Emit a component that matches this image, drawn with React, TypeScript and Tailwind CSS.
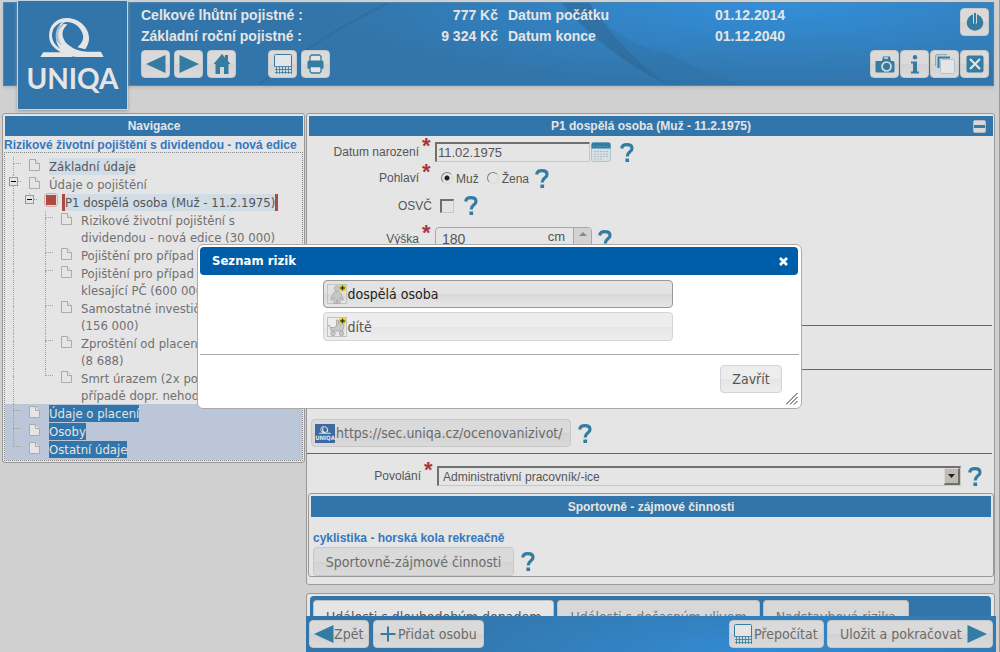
import type { ReactNode } from "react";
import { useState } from "react";
import clsx from "clsx";

type TreeNode = {
  id: string;
  level: number;
  lines: string[];
  expandable?: boolean;
  last?: boolean;
  state?: "visited" | "active" | "marked";
};

const treeNodes: TreeNode[] = [
  { id: "zaklad", level: 1, lines: ["Základní údaje"], state: "visited" },
  { id: "pojisteni", level: 1, lines: ["Údaje o pojištění"], expandable: true },
  { id: "p1", level: 2, lines: ["P1 dospělá osoba (Muž - 11.2.1975)"], expandable: true, last: true, state: "active" },
  { id: "rzp", level: 3, lines: ["Rizikové životní pojištění s", "dividendou - nová edice (30 000)"] },
  { id: "smrt", level: 3, lines: ["Pojištění pro případ smrti"] },
  { id: "smrtk", level: 3, lines: ["Pojištění pro případ smrti", "klesající PČ (600 000)"] },
  { id: "invest", level: 3, lines: ["Samostatné investiční", "(156 000)"] },
  { id: "zprost", level: 3, lines: ["Zproštění od placení", "(8 688)"] },
  { id: "uraz", level: 3, lines: ["Smrt úrazem (2x pojistná", "případě dopr. nehody)"], last: true },
  { id: "placeni", level: 1, lines: ["Údaje o placení"], state: "marked" },
  { id: "osoby", level: 1, lines: ["Osoby"], state: "marked" },
  { id: "ostatni", level: 1, lines: ["Ostatní údaje"], state: "marked", last: true }
];

const summary = [
  { label: "Celkové lhůtní pojistné :", value: "777 Kč", dateLabel: "Datum počátku", date: "01.12.2014" },
  { label: "Základní roční pojistné :", value: "9 324 Kč", dateLabel: "Datum konce", date: "01.12.2040" }
];

const uiFont = "font-['DejaVu_Sans_Condensed','DejaVu_Sans',Verdana,sans-serif]";
const buttonLook =
  "rounded border border-[#c8c8c8] bg-[linear-gradient(#dadada_50%,#d2d2d2_50%,#dadada)] text-[#6b6b6b]";
const titleLook = "flex h-5 items-center justify-center bg-[#3275aa] text-xs font-bold text-[#e5e5e5]";

function LogoMark({ className }: { className?: string }) {
  return (
    <svg viewBox="0 0 68 42" className={className} fill="none" aria-hidden="true">
      <path
        fill="#e5e5e5"
        d="M1 41 4 36H22C13 31 10 26 10 19C10 8 18 1 28 1C41 1 51 11 51 22C51 26 49 30 47 33L39 31C43 28 45 24 45 20C44 11 36 5 28 5C26 5 24 6 23 8C25 7 27 7 29 8C23 12 22 19 27 26C33 32 40 35 50 35.500H63L66 41H40C28 41 18 33 17 22C16 14 19 8 24 5C17 7 13 12 13 19C13 27 20 33 29 37L34 41Z"
      />
      <path fill="#3275aa" d="M25 8C18 13 18 22 23 29C17 25 14 20 15 14C17 9 20 8 25 8Z" opacity=".35" />
    </svg>
  );
}

function ArrowIcon({ left }: { left?: boolean }) {
  return (
    <svg viewBox="0 0 20 18" className="h-[18px] w-5 shrink-0" aria-hidden="true">
      <path d={left ? "M19.500 0V18L0 9Z" : "M.5 0V18L20 9Z"} fill="#357ca2" />
    </svg>
  );
}

function CalcIcon() {
  return (
    <svg viewBox="0 0 18 20" className="h-5 w-[18px] shrink-0" fill="none" stroke="#357ca2" aria-hidden="true">
      <path d="M.5 12V1.500Q.5 .5 1.500 .5H16.500Q17.500 .5 17.500 1.500V12" fill="#e5e5e5" />
      <path
        d="M0 12.500H18M1 15.500H18M1 18.500H18M2.500 12V20M5.500 12V20M8.500 12V20M11.500 12V20M14.500 12V20M17.500 12V20"
        opacity=".8"
      />
    </svg>
  );
}

function HelpIcon() {
  return (
    <button type="button" aria-label="Nápověda" className="flex h-5 w-4 shrink-0 items-center">
      <svg viewBox="0 0 14 19" className="h-[19px] w-3.5" fill="none" aria-hidden="true">
        <path
          d="M1.700 5.500C2 2.800 4 1.700 6.800 1.700C10 1.700 12 3.200 12 5.500C12 9 7.200 8.700 7.200 13.500"
          stroke="#357ca2"
          strokeWidth="3.200"
        />
        <path d="M5.400 15.500H9.100V19H5.400Z" fill="#357ca2" />
      </svg>
    </button>
  );
}

function DocIcon() {
  return (
    <svg viewBox="0 0 12 13" className="h-[13px] w-3" fill="#e5e5e5" stroke="#aeaca0" aria-hidden="true">
      <path d="M1.500 .5H7.500L11.500 4.500V11.500H1.500Z" />
      <path d="M7.500 .5V4.500H11.500" />
    </svg>
  );
}

function AddBadge() {
  return (
    <>
      <circle cx="15.500" cy="4" r="3.600" fill="#e0d11c" stroke="none" />
      <path d="M15.500 1.800V6.200M13.300 4H17.700" stroke="#333" strokeWidth="1.300" />
    </>
  );
}

function AdultIcon() {
  return (
    <svg viewBox="0 0 20 20" className="size-5 shrink-0" fill="#c8c8c8" stroke="#a4a4a4" strokeWidth=".7" aria-hidden="true">
      <rect x=".5" y=".5" width="19" height="19" fill="none" stroke="#c3c3c3" strokeWidth="1" />
      <circle cx="10" cy="4.500" r="2.700" />
      <path d="M7.500 8H12.500Q14 8.500 14.500 11L16.500 15.500L15 16.500L13 13V19.500H10.500V15.500H9.500V19.500H7V13L5 16.500L3.500 15.500L5.500 11Q6 8.500 7.500 8Z" />
      <AddBadge />
    </svg>
  );
}

function StrollerIcon() {
  return (
    <svg viewBox="0 0 20 20" className="size-5 shrink-0" fill="#c8c8c8" stroke="#a4a4a4" strokeWidth=".8" aria-hidden="true">
      <rect x=".5" y=".5" width="19" height="19" fill="none" stroke="#c3c3c3" strokeWidth="1" />
      <path d="M.8 8.500H2.500L4.500 14H15.500L17 9.500V7H11.500V3H9.500V9L7 10.500H3.500" />
      <circle cx="6" cy="16.500" r="2.200" />
      <circle cx="14.500" cy="16.500" r="2.200" />
      <AddBadge />
    </svg>
  );
}

function ToolButton({ label, children }: { label: string; children: ReactNode }) {
  return (
    <button type="button" aria-label={label} className={clsx("flex h-7 w-[29px] items-center justify-center", buttonLook)}>
      {children}
    </button>
  );
}

function Header() {
  return (
    <header className="relative mt-0.5 mr-[5px] ml-[3px] flex h-[84px] shrink-0 items-start border border-[#4a86b4] bg-[radial-gradient(ellipse_45%_100%_at_78%_0%,#338fda,#3275aa)] shadow-[0_2px_3px_#bbb]">
      <svg
        viewBox="0 0 990 82"
        preserveAspectRatio="none"
        className="absolute inset-0 size-full"
        fill="none"
        aria-hidden="true"
      >
        <path d="M255 82Q320 30 385 0" stroke="#2f6796" strokeWidth="2" opacity=".5" />
        <path d="M558 0Q600 50 664 82Q615 45 586 0Z" fill="#2f6592" opacity=".6" />
        <path d="M586 0Q615 45 664 82H740Q700 70 664 50Q610 40 586 0Z" fill="#2f6ca0" opacity=".3" />
      </svg>

      <div className="relative -mt-[3px] ml-[13px] flex h-[110px] w-[111px] shrink-0 flex-col items-center border border-[#c9d3dc] bg-[#3275aa] pt-4 shadow-[0_1px_3px_#999]">
        <LogoMark className="h-[41px] w-[67px]" />
        <span className="mt-1 font-[Lato,sans-serif] text-[28px] leading-8 font-bold text-[#e5e5e5]">UNIQA</span>
      </div>

      <div className="relative ml-[13px] flex flex-1 justify-between pt-0.5 pr-1">
        <div>
          <dl className="text-sm leading-[21px] font-bold text-[#e5e5e5]">
            {summary.map(row => (
              <div key={row.label} className="grid grid-cols-[200px_147px_197px_auto] gap-x-[10px]">
                <dt className="whitespace-nowrap">{row.label}</dt>
                <dd className="text-right">{row.value}</dd>
                <dt>{row.dateLabel}</dt>
                <dd>{row.date}</dd>
              </div>
            ))}
          </dl>
          <div className="mt-[3px] flex gap-1">
            <ToolButton label="Zpět">
              <ArrowIcon left />
            </ToolButton>
            <ToolButton label="Vpřed">
              <ArrowIcon />
            </ToolButton>
            <ToolButton label="Domů">
              <svg viewBox="0 0 18 20" className="h-5 w-[18px]" fill="#357ca2" aria-hidden="true">
                <path d="M9 0L12 3.500V1H15V7L17.500 10H15.500V20H11V13H7V20H2.500V10H.5Z" />
              </svg>
            </ToolButton>
            <div className="ml-7 flex gap-1">
              <ToolButton label="Přepočítat">
                <CalcIcon />
              </ToolButton>
              <ToolButton label="Tisk">
                <svg viewBox="0 0 17 20" className="h-5 w-[17px]" aria-hidden="true">
                  <path d="M3 7V2.500L4.500 1H12.500L14 2.500V7" fill="#e5e5e5" stroke="#357ca2" strokeWidth="1.300" />
                  <rect x=".5" y="6.500" width="16" height="8.500" rx="1.500" fill="#357ca2" />
                  <path d="M3 12.500H14V17.500L12.500 19H4.500L3 17.500Z" fill="#e5e5e5" stroke="#357ca2" strokeWidth="1.300" />
                </svg>
              </ToolButton>
            </div>
          </div>
        </div>

        <div className="flex flex-col items-end gap-3.5 pt-[3px]">
          <ToolButton label="Odhlásit">
            <svg viewBox="0 0 18 18" className="size-[18px]" aria-hidden="true">
              <circle cx="9" cy="9.500" r="8.300" fill="#357ca2" />
              <path d="M9 0V10.500" stroke="#d8d8d8" strokeWidth="4" />
              <path d="M9 0V10.500" stroke="#357ca2" strokeWidth="2" />
            </svg>
          </ToolButton>
          <div className="flex gap-px">
            <ToolButton label="Fotografie">
              <svg viewBox="0 0 20 18" className="h-[18px] w-5" aria-hidden="true">
                <path d="M1 6H7L8 1.500H15L16 6H18Q19.500 6 19.500 7.500V16Q19.500 17.500 18 17.500H2Q.5 17.500 .5 16V7Q.5 6 1 6Z" fill="#357ca2" />
                <path d="M9 3H13" stroke="#ddd" strokeWidth="1.500" />
                <circle cx="11.500" cy="11.500" r="4.500" fill="#357ca2" stroke="#ddd" strokeWidth="1.700" />
              </svg>
            </ToolButton>
            <ToolButton label="Informace">
              <svg viewBox="0 0 8 19" className="h-[19px] w-2" fill="#357ca2" aria-hidden="true">
                <circle cx="4" cy="2.200" r="2.200" />
                <path d="M0 6.500H6V16.500H8V18.500H0V16.500H2V8.500H0Z" />
              </svg>
            </ToolButton>
            <ToolButton label="Kopírovat">
              <svg viewBox="0 0 20 20" className="size-5" fill="#e5e5e5" stroke="#357ca2" aria-hidden="true">
                <path d="M.7 12V2Q.7 .7 2 .7H12" fill="none" opacity=".6" />
                <path d="M3.500 14V3.500H15" fill="none" strokeWidth="2" />
                <rect x="5.500" y="5.500" width="14" height="14" rx="1" stroke="#a9c4d2" />
              </svg>
            </ToolButton>
            <ToolButton label="Zavřít aplikaci">
              <svg viewBox="0 0 18 18" className="size-[18px]" aria-hidden="true">
                <rect x=".5" y=".5" width="17" height="17" rx="2" fill="#357ca2" />
                <path d="M4 4L14 14M14 4L4 14" stroke="#e5e5e5" strokeWidth="2.200" />
              </svg>
            </ToolButton>
          </div>
        </div>
      </div>
    </header>
  );
}

function TreeRow({ node }: { node: TreeNode }) {
  const marked = node.state === "marked";
  const active = node.state === "active";
  return (
    <li className={clsx("flex leading-[17px]", marked && "bg-[#bcc6d9]", marked && node.last && "pb-0.5")}>
      {Array.from({ length: node.level }, (_, i) => {
        const own = i === node.level - 1;
        const through = own ? !node.last : i === 0;
        return (
          <span key={i} className="relative flex w-4 shrink-0 flex-col pl-2">
            <span
              className={clsx(
                "h-[7px] border-dotted border-[#a0a0a0]",
                (own || through) && "border-l",
                own && "border-b"
              )}
            />
            <span className={clsx("flex-1 border-dotted border-[#a0a0a0]", through && "border-l")} />
            {own && node.expandable && (
              <button
                type="button"
                aria-label="Sbalit"
                className="absolute top-0.5 left-1 flex size-[9px] items-center justify-center border border-[#9a9a92] bg-[#e5e5e5]"
              >
                <span className="h-px w-[5px] bg-black" />
              </button>
            )}
          </span>
        );
      })}
      <span className="flex w-7 shrink-0 pt-0.5 pl-[7px]">
        {active ? (
          <span className="-mt-0.5 size-3.5 rounded-sm border border-[#d0a8a4] p-px">
            <span className="block size-full bg-[#ad4b42]" />
          </span>
        ) : (
          <DocIcon />
        )}
      </span>
      <a
        href={`#${node.id}`}
        className={clsx(
          "mt-px whitespace-nowrap",
          node.state === "visited" && "bg-[#d0dce6] text-[#555]",
          active && "-ml-[3px] border-x-[3px] border-[#ad4b42] bg-[#d0dce6] text-[#555]",
          marked && "bg-[#3275aa] text-[#e5e5e5]",
          !node.state && "text-[#707070]"
        )}
      >
        {node.lines.map(line => (
          <span key={line} className="block">
            {line}
          </span>
        ))}
      </a>
    </li>
  );
}

function Navigation() {
  return (
    <nav className="w-[303px] shrink-0 self-start overflow-hidden rounded-[3px] border border-[#999] bg-[#e5e5e5] px-px pt-0.5 pb-px">
      <h2 className={clsx(titleLook, "ml-px")}>Navigace</h2>
      <p className="h-4 pt-px text-xs leading-4 font-bold whitespace-nowrap text-[#3478c0]">
        Rizikové životní pojištění s dividendou - nová edice
      </p>
      <ul className={clsx("border border-dotted border-[#888] pt-1 text-[13px]", uiFont)}>
        {treeNodes.map(node => (
          <TreeRow key={node.id} node={node} />
        ))}
      </ul>
    </nav>
  );
}

function Field({
  label,
  htmlFor,
  required,
  className,
  children
}: {
  label: string;
  htmlFor: string;
  required?: boolean;
  className?: string;
  children: ReactNode;
}) {
  return (
    <div className={clsx("flex items-center", className)}>
      <label htmlFor={htmlFor} className="flex w-[125px] shrink-0 justify-end pr-px text-xs text-[#555]">
        {label}
        {required && (
          <span className="-mt-2 ml-[3px] h-4 w-2.5 text-[22px] leading-5 font-bold text-[#ad343e]">*</span>
        )}
      </label>
      {children}
    </div>
  );
}

function PersonPanel() {
  const [sex, setSex] = useState("muz");
  const radioLook =
    "size-3 appearance-none rounded-full border border-[#808080] border-r-[#d8d8d0] border-b-[#d8d8d0] bg-[#e5e5e5] checked:bg-[radial-gradient(#222_2px,transparent_3px)]";
  return (
    <section className="rounded-[3px] border border-[#999] bg-[#e5e5e5] pt-0.5 pb-[7px]">
      <h2 className={clsx(titleLook, "relative mr-px ml-0.5")}>
        P1 dospělá osoba (Muž - 11.2.1975)
        <button
          type="button"
          aria-label="Sbalit panel"
          className="absolute right-[7px] flex size-[13px] items-center justify-center rounded-xs border border-[#bbb] bg-[#d8d8d8]"
        >
          <span className="h-[3px] w-[11px] bg-[#357ca2]" />
        </button>
      </h2>

      <div className="pt-[3px] pl-px">
        <Field label="Datum narození" htmlFor="born" required className="h-[26px]">
          <input
            id="born"
            defaultValue="11.02.1975"
            className="ml-0.5 h-5 w-[155px] border border-t-2 border-l-2 border-[#c8c8c0] border-t-[#707070] border-l-[#707070] px-px text-[13px] text-[#555]"
          />
          <button type="button" aria-label="Kalendář" className="mr-[9px] ml-px">
            <svg viewBox="0 0 20 20" className="size-5" aria-hidden="true">
              <rect x=".5" y=".5" width="19" height="19" rx="2" fill="#d6dfe4" stroke="#a9c4d2" />
              <path d="M.5 2.500Q.5 .5 2.500 .5H17.500Q19.500 .5 19.500 2.500V6.500H.5Z" fill="#357ca2" />
              <path d="M2 4.500H18" stroke="#5d97b5" strokeDasharray="1 1" />
              <path d="M3 9.500H17M3 12H17M3 14.500H17M3 17H12" stroke="#b3bcc2" strokeDasharray="2 1" />
            </svg>
          </button>
          <HelpIcon />
        </Field>

        <Field label="Pohlaví" htmlFor="sex-m" required className="h-[26px]">
          <div className="flex h-full items-center text-xs text-[#555]">
            <input
              id="sex-m"
              type="radio"
              name="sex"
              checked={sex === "muz"}
              onChange={() => setSex("muz")}
              className={clsx("mr-[3px] ml-2", radioLook)}
            />
            <label htmlFor="sex-m" className="pt-0.5">
              Muž
            </label>
            <input
              id="sex-z"
              type="radio"
              name="sex"
              checked={sex === "zena"}
              onChange={() => setSex("zena")}
              className={clsx("mr-[3px] ml-2", radioLook)}
            />
            <label htmlFor="sex-z" className="mr-1.5 pt-0.5">
              Žena
            </label>
          </div>
          <HelpIcon />
        </Field>

        <Field label="OSVČ" htmlFor="osvc" className="h-[29px]">
          <input
            id="osvc"
            type="checkbox"
            className="mr-[10px] ml-[7px] size-3.5 appearance-none border border-t-2 border-l-2 border-[#c8c8c0] border-t-[#707070] border-l-[#707070] bg-[#e5e5e5] checked:bg-[#357ca2]"
          />
          <HelpIcon />
        </Field>

        <Field label="Výška" htmlFor="height" required className="h-9 pt-0.5">
          <div className="mr-1.5 ml-0.5 flex h-6 w-[157px] overflow-hidden rounded border border-[#a8a8a8] text-sm text-[#555]">
            <input id="height" defaultValue="180" className="min-w-0 flex-1 pl-1.5" />
            <span className="mr-2 text-[13px] leading-[18px]">cm</span>
            <button
              type="button"
              aria-label="Zvýšit"
              className="flex w-[18px] justify-center border-l border-[#a8a8a8] bg-[#d2d2d2] pt-1"
            >
              <svg viewBox="0 0 8 4" className="h-1 w-2" fill="#888" aria-hidden="true">
                <path d="M0 4L4 0L8 4Z" />
              </svg>
            </button>
          </div>
          <HelpIcon />
        </Field>
      </div>

      <hr className="mt-[69px] mr-0.5 border-[#666]" />
      <hr className="mt-[43px] mr-0.5 border-[#666]" />

      <div className="mt-[49px] flex items-center pl-1">
        <button
          type="button"
          className={clsx("mr-[7px] flex h-7 w-[260px] items-center pl-[3px] text-sm whitespace-nowrap", buttonLook, uiFont)}
        >
          <span className="mr-px flex h-[19px] w-5 shrink-0 flex-col items-center bg-[#3d6aa0] pt-0.5">
            <LogoMark className="h-2 w-3.5" />
            <span className="text-[6px] leading-[7px] font-bold text-[#e5e5e5]">UNIQA</span>
          </span>
          https://sec.uniqa.cz/ocenovanizivot/
        </button>
        <HelpIcon />
      </div>

      <hr className="mt-1.5 mr-0.5 border-[#666]" />

      <div className="flex items-center pt-3">
        <Field label="Povolání" htmlFor="job" required className="h-5 min-w-0 flex-1 pl-[3px]">
          <div className="relative ml-0.5 min-w-0 flex-1">
            <select
              id="job"
              className="block h-5 w-full appearance-none border border-t-2 border-l-2 border-[#c8c8c0] border-t-[#707070] border-l-[#707070] pl-1 text-xs text-[#555]"
            >
              <option>Administrativní pracovník/-ice</option>
            </select>
            <span className="pointer-events-none absolute top-0.5 right-px flex h-[17px] w-4 items-center justify-center border border-r-2 border-b-2 border-[#d8d8d0] border-r-[#707070] border-b-[#707070] bg-[#bfbcb5]">
              <svg viewBox="0 0 7 4" className="h-1 w-[7px]" aria-hidden="true">
                <path d="M0 0H7L3.500 4Z" fill="#222" />
              </svg>
            </span>
          </div>
        </Field>
        <div className="mr-[10px] ml-[7px]">
          <HelpIcon />
        </div>
      </div>

      <section className="mt-[7px] ml-px rounded-[3px] border border-[#999] p-0.5 pb-0">
        <h3 className={clsx(titleLook, "h-[21px]")}>Sportovně - zájmové činnosti</h3>
        <p className="mt-[13px] pl-0.5 text-xs leading-4 font-bold text-[#3478c0]">cyklistika - horská kola rekreačně</p>
        <div className="mt-px flex items-center pl-0.5">
          <button
            type="button"
            className={clsx("mr-[7px] h-[29px] w-[201px] text-sm whitespace-nowrap", buttonLook, uiFont)}
          >
            Sportovně-zájmové činnosti
          </button>
          <HelpIcon />
        </div>
      </section>
    </section>
  );
}

function EventTabs() {
  const tabLook = "h-8 rounded-t border border-b-0 border-[#c0c0c0] px-3 text-sm leading-6 whitespace-nowrap";
  return (
    <section className="mt-2 rounded-[3px] border border-[#999] bg-[#e5e5e5] px-[3px] pt-0.5">
      <div role="tablist" className={clsx("flex h-20 gap-[3px] rounded-t bg-[#3275aa] pt-1 pl-[3px]", uiFont)}>
        <button type="button" role="tab" aria-selected="true" className={clsx(tabLook, "bg-[#e5e5e5] text-[#555]")}>
          Události s dlouhodobým dopadem
        </button>
        <button type="button" role="tab" className={clsx(tabLook, "bg-[#d8d8d8] text-[#777]")}>
          Události s dočasným vlivem
        </button>
        <button type="button" role="tab" className={clsx(tabLook, "bg-[#d8d8d8] text-[#777]")}>
          Nadstavbová rizika
        </button>
      </div>
    </section>
  );
}

function ActionBar() {
  const actionLook = clsx("flex h-7 items-center text-sm whitespace-nowrap", buttonLook);
  return (
    <footer
      className={clsx(
        "flex h-9 shrink-0 items-start justify-between bg-[radial-gradient(ellipse_50%_200%_at_65%_100%,#338bd2,#3275aa)] px-[3px] pt-1",
        uiFont
      )}
    >
      <div className="flex gap-1">
        <button type="button" className={clsx(actionLook, "w-[60px] pl-1")}>
          <ArrowIcon left />
          <span>Zpět</span>
        </button>
        <button type="button" className={clsx(actionLook, "w-[111px] gap-0.5 pl-1.5")}>
          <svg viewBox="0 0 16 16" className="size-4 shrink-0" aria-hidden="true">
            <path d="M8 .5V15.500M.5 8H15.500" stroke="#357ca2" strokeWidth="2" />
          </svg>
          <span>Přidat osobu</span>
        </button>
      </div>
      <div className="flex gap-[3px]">
        <button type="button" className={clsx(actionLook, "w-[95px] gap-0.5 pl-1")}>
          <CalcIcon />
          <span>Přepočítat</span>
        </button>
        <button type="button" className={clsx(actionLook, "w-[166px] gap-[5px] pl-3")}>
          <span>Uložit a pokračovat</span>
          <ArrowIcon />
        </button>
      </div>
    </footer>
  );
}

function RiskDialog() {
  const choiceLook = "flex items-center rounded border pl-[3px] text-sm";
  return (
    <div className="fixed inset-0 flex items-start justify-center pt-[244px] pr-px">
      <div
        role="dialog"
        aria-labelledby="dialog-title"
        className={clsx("relative w-[605px] rounded-md border border-[#aaa] bg-white px-0.5 pt-0.5 pb-[15px]", uiFont)}
      >
        <div className="mr-px flex h-7 items-center justify-between rounded bg-[#005ea8] pr-[10px] pl-3 text-white">
          <h2 id="dialog-title" className="text-[13px] font-bold">
            Seznam rizik
          </h2>
          <button type="button" aria-label="Zavřít">
            <svg viewBox="0 0 9 9" className="size-[9px]" aria-hidden="true">
              <path d="M1 1L8 8M8 1L1 8" stroke="#fff" strokeWidth="2.800" />
            </svg>
          </button>
        </div>
        <div className="mt-[5px] flex justify-center pr-1">
          <div className="flex w-[350px] flex-col gap-1">
            <button
              type="button"
              className={clsx(choiceLook, "h-7 border-[#999] bg-[linear-gradient(#e3e3e3_50%,#d9d9d9_50%,#e6e6e6)] text-[#222]")}
            >
              <AdultIcon />
              <span className="ml-px">dospělá osoba</span>
            </button>
            <button
              type="button"
              className={clsx(choiceLook, "h-[29px] border-[#d3d3d3] bg-[linear-gradient(#ededed_50%,#e5e5e5_50%,#eee)] text-[#555]")}
            >
              <StrollerIcon />
              <span className="ml-px">dítě</span>
            </button>
          </div>
        </div>
        <div className="mt-[13px] flex justify-end border-t border-[#aaa] pt-2.5 pr-[17px]">
          <button
            type="button"
            className="h-7 w-[62px] rounded border border-[#d3d3d3] bg-[linear-gradient(#ededed_50%,#e5e5e5_50%,#eee)] text-sm text-[#555]"
          >
            Zavřít
          </button>
        </div>
        <svg viewBox="0 0 12 12" className="absolute right-[3px] bottom-[3px] size-3" stroke="#333" aria-hidden="true">
          <path d="M0 11.500L11.500 0M4 11.500L11.500 4M8 11.500L11.500 8" />
        </svg>
      </div>
    </div>
  );
}

export default function App() {
  return (
    <div className="flex h-screen flex-col overflow-hidden border-r border-[#999] bg-[#d0d0d0] font-['Liberation_Sans',Arial,sans-serif]">
      <Header />
      <div className="mt-[27px] mr-[3px] ml-0.5 flex min-h-0 flex-1 gap-px">
        <Navigation />
        <main className="flex min-w-0 flex-1 flex-col">
          <div className="mr-px min-h-0 flex-1 overflow-hidden">
            <PersonPanel />
            <EventTabs />
          </div>
          <ActionBar />
        </main>
      </div>
      <RiskDialog />
    </div>
  );
}
